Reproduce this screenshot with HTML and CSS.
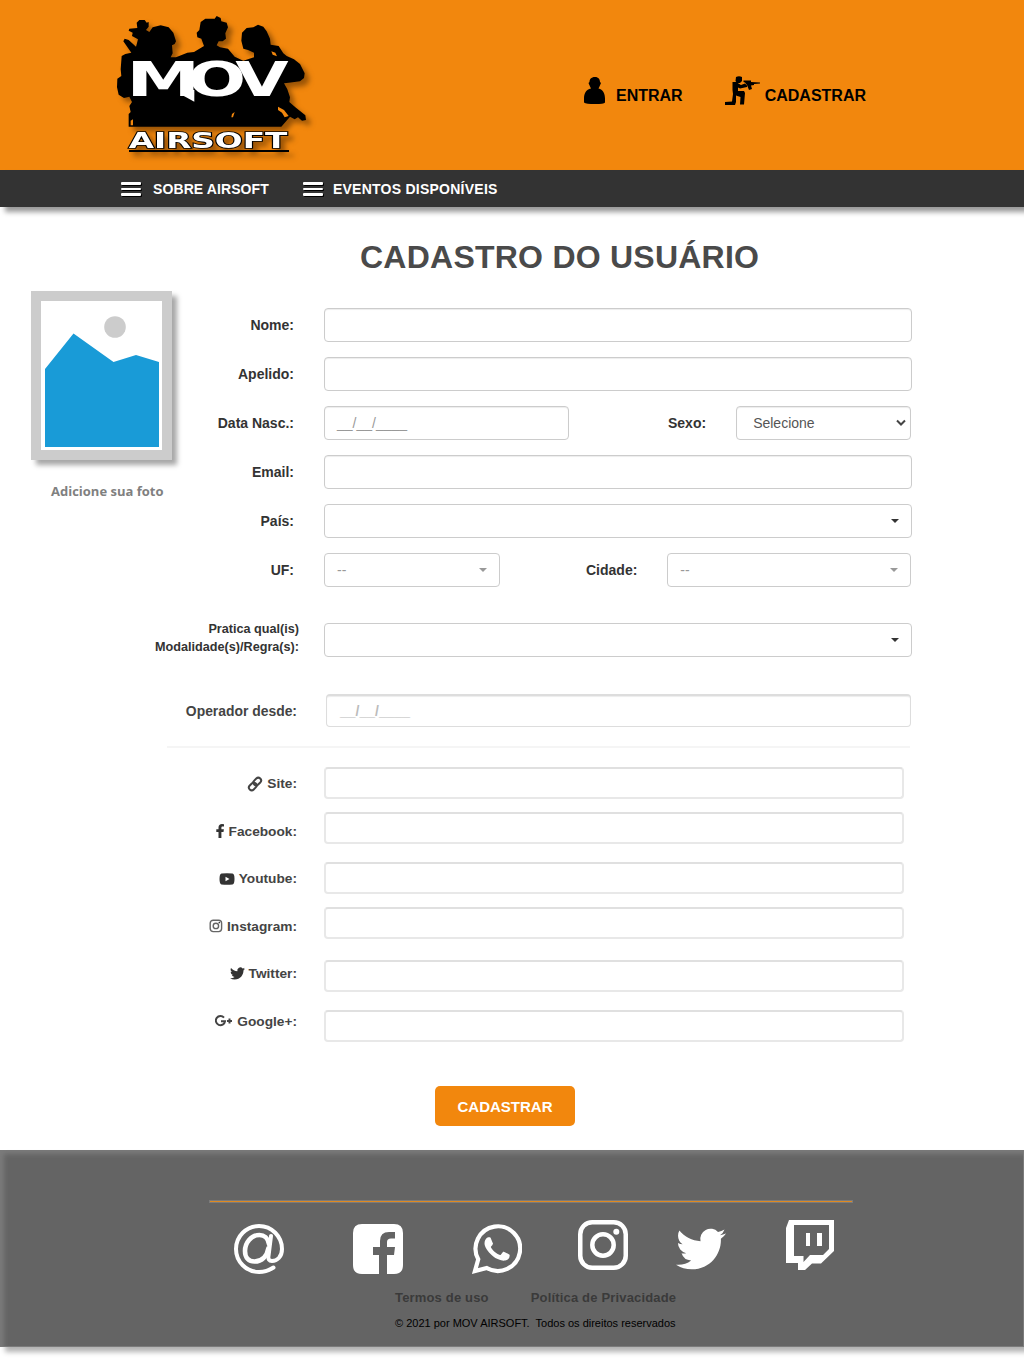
FILE: index.html
```html
<!DOCTYPE html>
<html lang="pt-BR">
<head>
<meta charset="utf-8">
<title>MOV Airsoft - Cadastro do Usuário</title>
<link rel="stylesheet" href="styles.css">
</head>
<body>
<header class="top">
  <svg class="logo" viewBox="0 0 690 510" role="img" aria-label="MOV Airsoft">
    <g class="logo-art">
      <path d="M86 380V342L92 336L88 318L96 306L88 290L72 294L56 284L51 262L52 236L64 228L62 208L65 168L76 162L94 158L70 124L74 116L86 120L108 140L114 118L96 108L98 98L86 92L88 86L112 84L110 68L118 60H134L140 68L146 66V80L138 90L148 96L158 82L182 76L206 82L220 98L228 124L224 132L216 136L218 160L212 172H228L262 158L282 156L312 138L304 116L292 112L290 98L298 90L302 66L316 56L344 56L350 48L362 54L364 64L380 68L384 82L376 100L378 116L368 124L356 124L350 136L360 142L384 146L404 170L430 182L462 172V158L444 150L430 146L424 122L426 98L440 84L460 82L474 74L490 80L500 94L510 116L512 134L536 138L550 160L560 168L582 178L600 192L614 220L612 234L600 244L566 248L552 250L562 268L570 292L568 306L586 322L616 346L618 360L606 362L594 352L584 358L570 350L544 380Z"/>
      <path class="logo-gap" d="M534 320l18 10 14 18-12 4-8-14-12-8zM394 352l2-10 8-6-5 16zM92 362l7-4v18h-7zM514 154l12 4 5 11-13-5z"/>
      <text class="mov" x="79" y="287" textLength="222" lengthAdjust="spacingAndGlyphs">M</text>
      <text class="mov" x="263" y="287" textLength="175" lengthAdjust="spacingAndGlyphs">O</text>
      <text class="mov" x="406" y="287" textLength="160" lengthAdjust="spacingAndGlyphs">V</text>
      <path class="tail" d="M246 270h37v35l-37-20z"/>
      <text class="airsoft" x="86" y="443" textLength="476" lengthAdjust="spacingAndGlyphs">AIRSOFT</text>
      <path d="M87 450H567V456H87z"/>
    </g>
  </svg>
  <nav class="account">
    <a class="login"><svg width="22" height="28" viewBox="0 0 22 28"><path d="M11 0C7 0 5.500 2.500 5.500 5L4.500 6L6 9.500L7 11.500C2 12 0 17 0 21.500V25.500Q2 27 11 27T21 25.500V21.500C21 17 19 12 14.500 11.500L15.500 9.500L17 6L16 5C16 2.500 14.500 0 11 0Z"/></svg>ENTRAR</a>
    <a class="join"><svg width="36" height="30" viewBox="0 0 36 30"><path d="M11 1Q14-.5 17 1V5L15 7H12L10.500 5ZM7.500 6L11 6L16 9L20 7.500L22 9.500L22 11L15 12.500L13 11.500V15H19L20 17L19 28.500H15L15.500 21L11 19.500V26L10 29H0V26L7 25.500L8 18L7.500 14ZM18.500 4.500H26V6L35 6.500V7.500L29 8V9L26 9.500L27 13L24 14L22 9L20 6.500L18.500 6Z"/></svg>CADASTRAR</a>
  </nav>
</header>
<nav class="menu">
  <a><span class="bars"><i></i><i></i><i></i></span>SOBRE AIRSOFT</a>
  <a class="events"><span class="bars"><i></i><i></i><i></i></span>EVENTOS DISPONÍVEIS</a>
</nav>
<main>
  <h1>CADASTRO DO USUÁRIO</h1>
  <div class="content">
    <aside class="photo">
      <svg width="141" height="169" viewBox="0 0 141 169"><path fill="#ccc" d="M0 0H141V169H0Z"/><path fill="#fff" d="M10 10H131V159H10Z"/><circle cx="84" cy="36" r="10.800" fill="#ccc"/><path fill="#199bd7" d="M14 78L42.500 42.500L82.500 71L105 64L128 71V156H14Z"/></svg>
      <p>Adicione sua foto</p>
    </aside>
    <form>
      <div class="row"><label>Nome:</label><span class="field"></span></div>
      <div class="row"><label>Apelido:</label><span class="field"></span></div>
      <div class="row"><label>Data Nasc.:</label><span class="field date">__/__/____</span><label class="sexo">Sexo:</label><span class="field select">Selecione<svg width="10" height="8" viewBox="0 0 10 8"><path d="M1 1.500L5 5.500L9 1.500" fill="none" stroke="#444" stroke-width="2"/></svg></span></div>
      <div class="row"><label>Email:</label><span class="field"></span></div>
      <div class="row"><label>País:</label><span class="field flat"><i class="caret"></i></span></div>
      <div class="row"><label>UF:</label><span class="field flat uf">--<i class="caret"></i></span><label class="cidade">Cidade:</label><span class="field flat city">--<i class="caret"></i></span></div>
      <div class="row practice"><label><span>Pratica qual(is)<br>Modalidade(s)/Regra(s):</span></label><span class="field flat"><i class="caret"></i></span></div>
      <div class="row since"><label>Operador desde:</label><span class="field">__/__/____</span></div>
      <hr>
      <div class="links">
        <div class="names">
          <label><svg width="16" height="16" viewBox="0 0 16 16"><g fill="none" stroke="#444" stroke-width="2"><rect x="6" y="2.800" width="8.500" height="5.600" rx="2.800" transform="rotate(-45 10.200 5.600)"/><rect x="1.500" y="7.600" width="8.500" height="5.600" rx="2.800" transform="rotate(-45 5.800 10.400)"/></g></svg>Site:</label>
          <label><svg width="9" height="14" viewBox="0 0 9 14"><path d="M2.500 14V8H.3V5.300H2.500V3.500C2.500 1.200 3.800 0 6 0L8 .2V2.500H6.700C5.700 2.500 5.400 3 5.400 3.700V5.300H7.900L7.500 8H5.400V14Z"/></svg>Facebook:</label>
          <label><svg width="16" height="12" viewBox="0 0 16 12"><path fill-rule="evenodd" d="M2.500.6Q8 0 13.500.6Q15.500.8 15.500 6T13.500 11.400Q8 12 2.500 11.400Q.5 11 .5 6T2.500.6ZM6.500 3.700V8.300L10.500 6Z"/></svg>Youtube:</label>
          <label><svg width="14" height="14" viewBox="0 0 14 14"><g fill="none" stroke="#666" stroke-width="1.400"><rect x="1.200" y="1.200" width="11.400" height="11.400" rx="3"/><circle cx="6.900" cy="6.900" r="2.700"/></g><circle cx="10.300" cy="3.600" r=".8"/></svg>Instagram:</label>
          <label class="tw"><svg width="15" height="15" viewBox="0 0 24 24"><path d="M23.953 4.570a10 10 0 01-2.825.775 4.958 4.958 0 002.163-2.723c-.951.555-2.005.959-3.127 1.184a4.920 4.920 0 00-8.384 4.482C7.690 8.095 4.067 6.130 1.640 3.162a4.822 4.822 0 00-.666 2.475c0 1.710.870 3.213 2.188 4.096a4.904 4.904 0 01-2.228-.616v.060a4.923 4.923 0 003.946 4.827 4.996 4.996 0 01-2.212.085 4.936 4.936 0 004.604 3.417 9.867 9.867 0 01-6.102 2.105c-.390 0-.779-.023-1.170-.067a13.995 13.995 0 007.557 2.209c9.053 0 13.998-7.496 13.998-13.985 0-.210 0-.420-.015-.630A9.935 9.935 0 0024 4.590z"/></svg>Twitter:</label>
          <label><svg width="18" height="12" viewBox="0 0 18 12"><path fill="none" stroke="#444" stroke-width="2" d="M9 2.700A4.600 4.600 0 1 0 10 6.300H6M12 6H17M14.500 3.500V8.500"/></svg>Google+:</label>
        </div>
        <div class="urls"><span></span><span></span><span></span><span></span><span></span><span></span></div>
      </div>
      <button type="button">CADASTRAR</button>
    </form>
  </div>
</main>
<footer>
  <hr>
  <div class="social">
    <svg class="at" width="52" height="52" viewBox="0 0 52 52"><g fill="none" stroke="#fff" stroke-width="4" stroke-linecap="round"><path d="M40.500 44.500C36 47.500 31 49 26 49A23 23 0 1 1 49 26C49 34 44 38 39 38C36 38 35 36 35.500 33L38 13"/><path stroke-width="4.600" d="M36 21C35 15 31 12 26.500 12C18 12 12 20 12 28C12 35 16 38.500 21.500 38.500C29 38.500 34 33 35.500 25"/></g></svg>
    <svg class="fb" width="50" height="50" viewBox="0 0 50 50"><path fill="#fff" d="M9 0H41Q50 0 50 9V41Q50 50 41 50H34V31H41L42 23H34V18Q34 14.500 38 14.500H42V8H36Q27 8 27 17V23H20V31H26V50H9Q0 50 0 41V9Q0 0 9 0Z"/></svg>
    <svg class="wa" width="50" height="50" viewBox="0 0 24 24"><path fill="#fff" d="M17.472 14.382c-.297-.149-1.758-.867-2.030-.967-.273-.099-.471-.148-.670.150-.197.297-.767.966-.940 1.164-.173.199-.347.223-.644.075-.297-.150-1.255-.463-2.390-1.475-.883-.788-1.480-1.761-1.653-2.059-.173-.297-.018-.458.130-.606.134-.133.298-.347.446-.520.149-.174.198-.298.298-.497.099-.198.050-.371-.025-.520-.075-.149-.669-1.612-.916-2.207-.242-.579-.487-.500-.669-.510-.173-.008-.371-.010-.570-.010-.198 0-.520.074-.792.372-.272.297-1.040 1.016-1.040 2.479 0 1.462 1.065 2.875 1.213 3.074.149.198 2.096 3.200 5.077 4.487.709.306 1.262.489 1.694.625.712.227 1.360.195 1.871.118.571-.085 1.758-.719 2.006-1.413.248-.694.248-1.289.173-1.413-.074-.124-.272-.198-.570-.347"/><path fill="none" stroke="#fff" stroke-width="2" d="M1.400 22.600L3 16.900A10.700 10.700 0 1 1 7.100 21.100Z"/></svg>
    <svg class="ig" width="50" height="50" viewBox="0 0 50 50"><g fill="none" stroke="#fff" stroke-width="4.500"><rect x="2.250" y="2.250" width="45.500" height="45.500" rx="12"/><circle cx="25" cy="25" r="10.700"/></g><circle cx="38.300" cy="11.700" r="3" fill="#fff"/></svg>
    <svg class="bird" width="50" height="50" viewBox="0 0 24 24"><path fill="#fff" d="M23.953 4.570a10 10 0 01-2.825.775 4.958 4.958 0 002.163-2.723c-.951.555-2.005.959-3.127 1.184a4.920 4.920 0 00-8.384 4.482C7.690 8.095 4.067 6.130 1.640 3.162a4.822 4.822 0 00-.666 2.475c0 1.710.870 3.213 2.188 4.096a4.904 4.904 0 01-2.228-.616v.060a4.923 4.923 0 003.946 4.827 4.996 4.996 0 01-2.212.085 4.936 4.936 0 004.604 3.417 9.867 9.867 0 01-6.102 2.105c-.390 0-.779-.023-1.170-.067a13.995 13.995 0 007.557 2.209c9.053 0 13.998-7.496 13.998-13.985 0-.210 0-.420-.015-.630A9.935 9.935 0 0024 4.590z"/></svg>
    <svg class="twitch" width="48" height="50" viewBox="0 0 48 50"><path fill="#fff" fill-rule="evenodd" d="M3 0H48V31L35 43.500H26L19 50H12V43H0V8ZM8 5V36H17.500V42L24 35H37L43 29V5ZM20 13H24V26H20ZM31 13H36V26H31Z"/></svg>
  </div>
  <div class="legal"><a>Termos de uso</a><a>Política de Privacidade</a></div>
  <p>© 2021 por MOV AIRSOFT.&nbsp; Todos os direitos reservados</p>
</footer>
</body>
</html>
```
FILE: styles.css
```css
* { box-sizing: border-box; }
body { margin: 0; height: 1358px; overflow: hidden; background: #fff; color: #333; font: 14px "Liberation Sans", Arial, sans-serif; white-space: nowrap; }
svg { display: block; flex: none; }

.top { height: 170px; background: #f2870d; display: flex; padding-left: 100px; color: #000; }
.logo { width: 230px; height: 170px; overflow: visible; }
.logo-art { filter: drop-shadow(14px 14px 8px rgba(70, 35, 0, .5)); }
.logo-gap { fill: #f2870d; }
.mov { font: bold 142px "DejaVu Sans", sans-serif; fill: #fff; }
.tail { fill: #fff; }
.airsoft { font: bold 66px "DejaVu Sans", sans-serif; fill: #fff; stroke: #000; stroke-width: 5px; paint-order: stroke; }
.account { display: flex; align-items: flex-start; padding: 76px 0 0 254px; font: bold 16px/18px "Liberation Sans", Arial, sans-serif; }
.account a { display: flex; align-items: flex-start; padding-top: 11px; }
.account svg { margin-top: -10px; }
.login svg { margin-right: 10px; }
.join { margin-left: 42px; }
.account .join svg { margin: -11px 4px 0 0; }

.menu { height: 37px; background: #333; display: flex; align-items: center; padding: 0 0 0 121px; color: #fff; font-weight: bold; letter-spacing: .1px; box-shadow: 5px 5px 5px rgba(0, 0, 0, .4); }
.menu a { display: flex; align-items: center; }
.bars { width: 20px; height: 14px; display: flex; flex-direction: column; justify-content: space-between; margin-right: 12px; filter: drop-shadow(1px 1px 0 #000); }
.bars i { height: 3px; background: #fff; border-radius: 1px; }
.bars i:nth-child(2) { height: 2px; }
.events { margin-left: 34px; letter-spacing: .25px; }
.events .bars { margin-right: 10px; }

main { height: 943px; padding-top: 31px; }
h1 { margin: 0 0 0 360px; font-size: 32px; line-height: 38px; letter-spacing: .24px; color: #4a4a4a; }
.content { display: flex; padding: 15px 0 0 31px; }
.photo { width: 141px; }
.photo svg { box-shadow: 5px 5px 5px rgba(0, 0, 0, .35); }
.photo p { margin: 22px 0 0 20px; font: bold 13px/18px "Open Sans", sans-serif; color: #808080; }
form { width: 740px; padding-top: 17px; display: flex; flex-direction: column; }
.row { height: 34px; margin-bottom: 15px; display: flex; align-items: center; }
label { font-weight: bold; }
.row > label:first-child { width: 122px; margin-right: 30px; display: flex; justify-content: flex-end; text-align: right; }
.field { flex: 1; height: 34px; border: 1px solid #ccc; border-radius: 4px; padding: 0 12px; display: flex; align-items: center; justify-content: space-between; color: #999; box-shadow: inset 0 1px 1px rgba(0, 0, 0, .075); }
.field.flat { box-shadow: none; }
.field.date { flex: 0 0 245px; }
.sexo { margin: 0 30px 0 99px; }
.field.select { flex: 0 0 175px; padding: 0 4px 0 16px; color: #555; }
.caret { border: 4px solid transparent; border-top-color: #333; border-bottom: 0; margin-left: auto; }
.uf .caret, .city .caret { border-top-color: #999; }
.field.uf { flex: 0 0 176px; }
.cidade { margin: 0 30px 0 86px; }
.field.city { flex: 0 0 244px; }
.row.practice { margin: 21px 0 37px; }
.row.practice > label { width: 127px; margin-right: 25px; font-size: 12.650px; line-height: 18px; padding-bottom: 4px; }
.row.since { height: 33px; margin-bottom: 19px; }
.row.since > label { width: 125px; margin-right: 29px; font-size: 13.900px; color: #444; }
.since .field { flex: 0 0 585px; height: 33px; border-color: #ddd; border-width: 2px 1.500px 1px; padding-left: 13px; color: #bbb; font-weight: bold; font-size: 14px; }
form hr { height: 2px; margin: 0 0 0 -5px; width: 743px; border: 0; background: #f5f5f5; }
.links { display: flex; margin-top: 19px; }
.names { width: 125px; margin-right: 27px; display: flex; flex-direction: column; gap: 27.500px; padding-top: 6.500px; }
.names label { height: 20px; display: flex; align-items: center; justify-content: flex-end; gap: 4px; font-size: 13.700px; color: #444; }
.names svg { fill: #333; }
.urls { display: flex; flex-direction: column; }
.urls span { width: 580px; height: 32px; border: 2px solid #e8e8e8; border-top-color: #e0e0e0; border-radius: 4px; margin-bottom: 13px; }
.urls span:nth-child(2), .urls span:nth-child(5) { margin-bottom: 18px; }
.urls span:nth-child(4) { margin-bottom: 21px; }
.urls span:last-child { margin-bottom: 0; }
button { margin: 44px 0 0 263px; width: 140px; height: 40px; padding: 1px 0 0; border: 0; border-radius: 5px; background: #f2870d; color: #fff; font: bold 15px "Liberation Sans", Arial, sans-serif; }

footer { height: 197px; padding-top: 50px; background: #646464; box-shadow: 5px 5px 5px rgba(0, 0, 0, .3), inset 4px 4px 5px #7b7b7b, inset -1px -1px 0 #7b7b7b; }
footer hr { width: 644px; height: 3px; margin: 0 0 0 209px; border: 1px solid #7b7b7b; background: #e08a20; }
.social { display: flex; padding: 17px 0 0 233px; height: 72px; }
.at { margin: 3px 0 0; }
.fb { margin: 4px 0 0 68px; }
.wa { margin: 4px 0 0 69px; }
.ig { margin-left: 56px; }
.bird { margin: 4px 0 0 48px; }
.twitch { margin-left: 60px; }
.legal { display: flex; gap: 42px; padding: 15px 0 0 395px; font: bold 13px/16px "Liberation Sans", Arial, sans-serif; letter-spacing: .17px; color: #3a3a3a; }
footer p { margin: 9px 0 0 395px; font-size: 11px; line-height: 16px; color: #000; }
```
